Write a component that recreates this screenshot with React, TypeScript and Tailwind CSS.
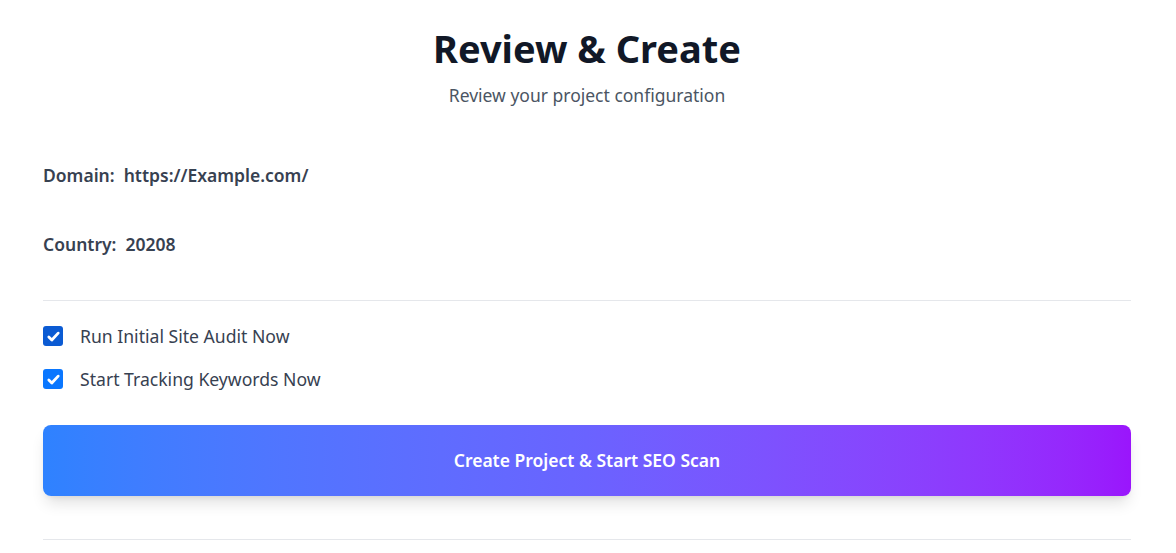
import React from "react";

function Check({ dark }: { dark?: boolean }) {
  return (
    <span
      className={`flex h-5 w-5 items-center justify-center rounded-[3px] ${dark ? "bg-[#0b5bd3]" : "bg-[#0a77ff]"}`}
    >
      <svg viewBox="0 0 16 16" className="h-[15px] w-[15px]" fill="none">
        <path d="M3 8.6l3.2 3.1L13 4.4" stroke="white" strokeWidth="3" strokeLinecap="round" strokeLinejoin="round" />
      </svg>
    </span>
  );
}

export default function App() {
  return (
    <div className="min-h-[553px] bg-white pl-[43px] pr-[45px] pt-[25px] text-[#374151]" style={{ fontFamily: '"Noto Sans", "Open Sans", sans-serif' }}>
      <div className="flex flex-col items-center">
        <h1 className="text-[38px] font-bold leading-[46px] text-[#111827]">Review &amp; Create</h1>
        <p className="mt-[12px] text-[17.5px] leading-6 text-[#4b5563]">Review your project configuration</p>
      </div>
      <div className="mt-[56px] flex flex-col gap-[45px] text-[17.5px] font-semibold">
        <div className="leading-6">Domain:&nbsp; https://Example.com/</div>
        <div className="leading-6">Country:&nbsp; 20208</div>
      </div>
      <div className="mt-[44px] border-t border-[#e5e7eb]" />
      <div className="mt-[23px] flex flex-col gap-[19px] text-[17.6px]">
        <label className="flex items-center gap-[17px] leading-6">
          <Check dark />
          <span>Run Initial Site Audit Now</span>
        </label>
        <label className="flex items-center gap-[17px] leading-6">
          <Check />
          <span>Start Tracking Keywords Now</span>
        </label>
      </div>
      <button className="mt-[34px] flex h-[71px] w-full items-center justify-center rounded-lg bg-gradient-to-r from-[#2e82ff] via-[#6a63ff] to-[#9a15fc] text-[17.5px] font-semibold text-white shadow-[0_10px_15px_-3px_rgba(0,0,0,0.12),0_4px_6px_-4px_rgba(0,0,0,0.1)]">
        Create Project &amp; Start SEO Scan
      </button>
      <div className="mt-[43px] border-t border-[#e5e7eb]" />
    </div>
  );
}
